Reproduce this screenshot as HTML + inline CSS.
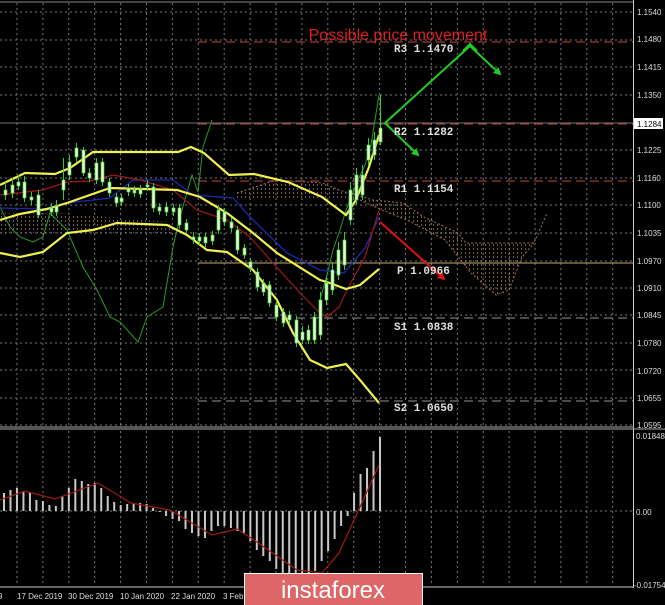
<!DOCTYPE html>
<html><head><meta charset="utf-8"><style>
html,body{margin:0;padding:0;background:#000;width:665px;height:605px;overflow:hidden}
svg{display:block}
.ax{font-family:"Liberation Sans",sans-serif;font-size:8px;fill:#ddd}
.lv{font-family:"Liberation Mono",monospace;font-size:11px;fill:#e0e0e0;font-weight:bold}
</style></head><body>
<svg id="s" width="665" height="605" viewBox="0 0 665 605" xmlns="http://www.w3.org/2000/svg">
<defs>
<pattern id="dots" width="4" height="4" patternUnits="userSpaceOnUse"><rect x="1" y="0" width="1" height="2" fill="#a08070"/></pattern>
<marker id="ag" markerWidth="8" markerHeight="8" refX="6" refY="4" orient="auto" markerUnits="userSpaceOnUse"><path d="M0,0 L8,4 L0,8 z" fill="#22cc22"/></marker>
<marker id="ar" markerWidth="8" markerHeight="8" refX="6" refY="4" orient="auto" markerUnits="userSpaceOnUse"><path d="M0,0 L8,4 L0,8 z" fill="#dd1111"/></marker>
</defs>
<rect width="665" height="605" fill="#000"/>
<line x1="0" y1="2" x2="634" y2="2" stroke="#888"/>
<g id="grid" stroke="#777" stroke-dasharray="2,3" stroke-width="1"></g>
<path d="M0,213 L60,213 L120,218 L170,222 L170,233 L120,233 L60,233 L0,233 z" fill="url(#dots)" opacity="0.7"/>
<path d="M237,193 L276,180 L322,183 L339,190 L373,200 L403,203 L424,217 L458,233 L466,243 L534,243 L547,213 L534,243 L522,257 L509,290 L496,295 L471,273 L445,240 L407,220 L382,210 L360,200 L237,200 z" fill="url(#dots)" opacity="0.7"/>
<path d="M237,193 L276,180 L322,183 L339,190 L373,200 L403,203 L424,217 L458,233 L466,243 L534,243 L547,213" fill="none" stroke="#a07060" stroke-dasharray="2,2" stroke-width="1"/>
<path d="M360,200 L382,210 L407,220 L445,240 L471,273 L496,295 L509,290 L522,257 L534,243" fill="none" stroke="#a07060" stroke-dasharray="2,2"/>
<g stroke-dasharray="9,5" stroke-width="1.3">
<line x1="198" y1="42" x2="634" y2="42" stroke="#a03a30"/>
<line x1="198" y1="124" x2="634" y2="124" stroke="#a03a30"/>
<line x1="198" y1="181" x2="634" y2="181" stroke="#a03a30"/>
<line x1="198" y1="318" x2="634" y2="318" stroke="#777"/>
<line x1="198" y1="401" x2="634" y2="401" stroke="#777"/>
</g>
<line x1="198" y1="263" x2="634" y2="263" stroke="#c8a870" stroke-width="1"/>
<line x1="0" y1="123" x2="634" y2="123" stroke="#999" stroke-width="0.8"/>
<polyline fill="none" stroke="#2a9a2a" stroke-width="1" points="0,207 10,227 20,237 33,242 43,237 50,213 67,230 83,267 97,290 110,317 120,322 130,333 138,342 147,317 163,307 173,247 180,217 192,175 198,192 203,147 212,120"/>
<polyline fill="none" stroke="#2a9a2a" stroke-width="1" points="320,300 327,275 333,250 340,230 346,210 352,195 358,180 365,165 371,145 379,95"/>
<polyline fill="none" stroke="#1a2ab0" stroke-width="1.3" points="0,208 43,209 67,203 110,198 133,180 173,180 193,195 233,198 250,217 287,253 320,270 344,273 365,248 379,217"/>
<polyline fill="none" stroke="#a01818" stroke-width="1.2" points="0,195 43,190 67,182 90,181 113,175 140,180 173,190 197,210 227,220 250,237 273,263 300,293 320,313 327,317 339,307 348,288 365,257 379,210"/>
<g fill="none" stroke="#f0f050" stroke-width="2.2">
<polyline points="0,185 25,173 55,174 70,168 93,152 178,152 191,147 204,153 229,175 254,174 288,182 322,197 346,215 356,200 369,167 379,135"/>
<polyline points="0,220 20,214 47,209 67,203 110,188 177,190 200,197 227,213 253,233 277,253 320,280 327,282 346,289 360,285 379,269"/>
<polyline points="0,253 20,257 43,252 67,233 93,230 117,223 167,225 187,235 207,250 227,252 253,270 277,300 293,333 310,360 327,368 346,364 360,380 379,403"/>
</g>
<g id="candles"></g>
<polyline points="385,123 470,46 500,74" fill="none" stroke="#22cc22" stroke-width="2" marker-end="url(#ag)"/>
<line x1="385" y1="123" x2="418" y2="155" stroke="#22cc22" stroke-width="2" marker-end="url(#ag)"/>
<line x1="380" y1="222" x2="444" y2="279" stroke="#dd1111" stroke-width="2" marker-end="url(#ar)"/>
<path d="M463,51 L470,44 L477,51" fill="none" stroke="#22cc22" stroke-width="2"/>
<text x="398" y="40" text-anchor="middle" font-family="Liberation Sans,sans-serif" font-size="16" fill="#dd2020">Possible price movement</text>
<text class="lv" x="394" y="52">R3 1.1470</text>
<text class="lv" x="394" y="135">R2 1.1282</text>
<text class="lv" x="394" y="192">R1 1.1154</text>
<text class="lv" x="397" y="274">P 1.0966</text>
<text class="lv" x="394" y="330">S1 1.0838</text>
<text class="lv" x="394" y="411">S2 1.0650</text>
<line x1="633.5" y1="0" x2="633.5" y2="588" stroke="#ccc"/>
<line x1="0" y1="427" x2="634" y2="427" stroke="#aaa"/>
<line x1="0" y1="429" x2="665" y2="429" stroke="#aaa"/>
<line x1="0" y1="587" x2="634" y2="587" stroke="#ccc"/>
<g class="ax">
<text x="637" y="15">1.1540</text><text x="637" y="42">1.1480</text><text x="637" y="70">1.1415</text>
<text x="637" y="98">1.1350</text><text x="637" y="153">1.1225</text><text x="637" y="181">1.1160</text>
<text x="637" y="208">1.1100</text><text x="637" y="236">1.1035</text><text x="637" y="264">1.0970</text>
<text x="637" y="291">1.0910</text><text x="637" y="318">1.0845</text><text x="637" y="346">1.0780</text>
<text x="637" y="374">1.0720</text><text x="637" y="401">1.0655</text><text x="637" y="428">1.0595</text>
<text x="636" y="439">0.01848</text><text x="636" y="515">0.00</text><text x="634" y="588">-0.01754</text>
<text x="-2" y="599">9</text><text x="17" y="599">17 Dec 2019</text><text x="68" y="599">30 Dec 2019</text>
<text x="120" y="599">10 Jan 2020</text><text x="171" y="599">22 Jan 2020</text><text x="223" y="599">3 Feb</text>
</g>
<rect x="634" y="118" width="29" height="11" fill="#fff"/>
<text x="637" y="127" font-family="Liberation Sans,sans-serif" font-size="8" fill="#000">1.1284</text>
<line x1="0" y1="511" x2="634" y2="511" stroke="#777" stroke-dasharray="2,3"/>
<g id="hist" fill="#c8c8c8"></g>
<polyline fill="none" stroke="#a01818" stroke-width="1.2" points="0,500 25,491 55,499 98,483 131,503 170,510 212,535 237,529 254,540 297,570 322,573 339,553 360,507 379,465"/>
<rect x="244.5" y="573.5" width="178" height="32" fill="#dd6666" stroke="#fff"/>
<text x="333" y="598" text-anchor="middle" font-family="Liberation Sans,sans-serif" font-size="24" fill="#fff">instaforex</text>
</svg>
<script>
var NS="http://www.w3.org/2000/svg";
function el(p,t,a){var e=document.createElementNS(NS,t);for(var k in a)e.setAttribute(k,a[k]);p.appendChild(e);return e;}
var g=document.getElementById("grid");
for(var x=17;x<634;x+=25.9){el(g,"line",{x1:x,y1:3,x2:x,y2:426});el(g,"line",{x1:x,y1:431,x2:x,y2:586});}
[12,40,67,95,150,178,205,233,261,288,315,343,370,398,425].forEach(function(y){el(g,"line",{x1:0,y1:y,x2:634,y2:y});});
var c=document.getElementById("candles");
var cs=[[4,190,195,182,200],[11,185,193,178,198],[17,182,186,175,190],[23,182,198,176,202],[30,197,200,192,205],[37,195,215,190,218],[50,208,212,203,216],[55,206,212,200,216],[62,180,190,158,200],[68,162,175,155,180],[75,148,157,143,162],[82,150,173,147,176],[88,173,178,168,182],[95,163,180,158,184],[101,162,182,158,186],[108,182,193,178,197],[115,197,203,193,207],[120,198,202,194,206],[127,188,192,184,196],[133,190,193,186,197],[139,189,194,185,198],[146,185,187,180,191],[152,187,208,183,212],[158,207,211,203,215],[165,207,212,202,216],[172,208,212,204,216],[178,208,225,204,229],[185,223,230,219,234],[192,237,240,232,244],[198,237,241,233,245],[204,237,243,233,247],[211,235,241,231,245],[217,210,230,205,234],[223,212,222,208,226],[230,222,228,218,232],[236,230,250,226,254],[243,248,255,244,259],[249,262,268,258,272],[256,272,287,268,291],[262,283,292,279,296],[268,285,303,281,307],[275,305,317,300,321],[282,312,323,308,327],[288,315,320,311,324],[295,320,343,316,347],[301,332,340,326,344],[307,330,340,325,344],[313,317,340,312,344],[319,300,335,292,340],[325,283,300,276,305],[331,270,290,262,295],[337,250,275,242,280],[343,240,265,232,270],[349,190,220,182,225],[355,175,200,168,205],[361,175,195,165,200],[367,145,160,138,165],[373,140,155,132,160],[379,128,142,95,145]];
cs.forEach(function(a){el(c,"line",{x1:a[0]+1.5,y1:a[3],x2:a[0]+1.5,y2:a[4],stroke:"#3c3","stroke-width":1});el(c,"rect",{x:a[0],y:a[1],width:3,height:Math.max(1,a[2]-a[1]),fill:"#e8ffd0",stroke:"#4c4","stroke-width":0.7});});
var h=document.getElementById("hist");
var v=[18,21,23,20,19,11,10,6,5,15,23,32,30,27,28,23,15,9,6,7,7,8,7,3,-1,-5,-8,-10,-18,-22,-25,-27,-20,-15,-15,-17,-20,-22,-30,-39,-45,-50,-58,-63,-65,-65,-65,-63,-60,-50,-40,-28,-15,-5,18,37,43,60,74];
for(var i=0;i<v.length;i++){var xx=3+i*(376/(v.length-1));var t=v[i];el(h,"rect",{x:xx,y:t>0?511-t:511,width:2,height:Math.abs(t)||1});}
</script>
</body></html>
